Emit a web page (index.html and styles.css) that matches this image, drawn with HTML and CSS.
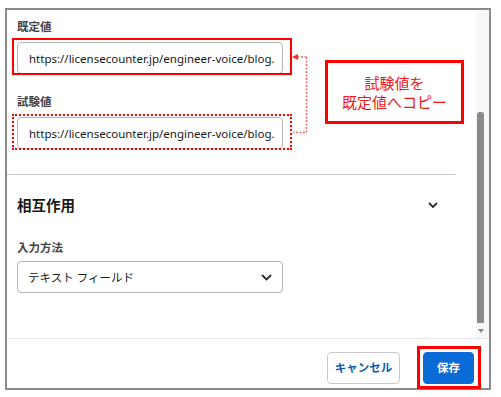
FILE: index.html
```html
<!DOCTYPE html>
<html lang="ja">
<head>
<meta charset="utf-8">
<link rel="stylesheet" href="styles.css">
</head>
<body>
<div class="frame">
  <div class="main">
    <div class="content">
      <div class="fields">
        <div class="label">既定値</div>
        <div class="input"><span>https://licensecounter.jp/engineer-voice/blog.</span></div>
        <div class="label label-2">試験値</div>
        <div class="input"><span>https://licensecounter.jp/engineer-voice/blog.</span></div>
      </div>
      <div class="divider"></div>
      <div class="section">
        <div class="section-head">
          <span class="section-title">相互作用</span>
          <svg class="chev" width="10" height="6" viewBox="0 0 10 6"><polyline points="1,1 5,5 9,1" fill="none" stroke="#2b2b2b" stroke-width="1.8"/></svg>
        </div>
        <div class="label label-3">入力方法</div>
        <div class="select">
          <span>テキスト フィールド</span>
          <svg width="11" height="7" viewBox="0 0 11 7"><polyline points="1,1 5.5,5.5 10,1" fill="none" stroke="#2b2b2b" stroke-width="1.8"/></svg>
        </div>
      </div>
    </div>
    <div class="scrollbar">
      <div class="thumb"></div>
      <div class="arrow"></div>
    </div>
  </div>
  <div class="footer">
    <button class="btn btn-cancel">キャンセル</button>
    <button class="btn btn-save">保存</button>
  </div>
</div>

<div class="mark mark-default"></div>
<div class="mark mark-test"></div>
<div class="mark mark-save"></div>
<div class="callout">試験値を<br>既定値へコピー</div>
<svg class="connector" width="501" height="397" viewBox="0 0 501 397">
  <path d="M306.5 57 H297 M306.5 57 V132.5 H293" fill="none" stroke="#f46a6a" stroke-width="1.5" stroke-dasharray="2 1.5"/>
  <polygon points="292,57 298,54 298,60" fill="#f03030"/>
</svg>
</body>
</html>
```

FILE: styles.css
```css
* { box-sizing: border-box; }
html, body { margin: 0; padding: 0; background: #fff; }
body {
  position: relative;
  width: 501px;
  height: 397px;
  overflow: hidden;
  font-family: "Noto Sans", "Noto Sans CJK JP", sans-serif;
  color: #181818;
}
.frame {
  margin: 8px 0 0 5px;
  width: 486px;
  height: 382px;
  border: 2px solid #8b8b8b;
  display: flex;
  flex-direction: column;
  background: #fff;
}
.main {
  flex: 1;
  display: flex;
  min-height: 0;
}
.content {
  width: 449px;
  padding-top: 9px;
}
.fields { padding: 0 10px; }
.label {
  font-size: 11.5px;
  font-weight: 700;
  line-height: 16px;
  color: #444;
  height: 16px;
}
.label-2 { margin-top: 20px; }
.input, .select {
  width: 266px;
  height: 32px;
  border: 1px solid #b4b4b4;
  border-radius: 4px;
  margin-top: 7px;
  padding: 0 8px 0 11px;
  display: flex;
  align-items: center;
  font-size: 11.5px;
  white-space: nowrap;
  overflow: hidden;
  background: #fff;
}
.input span { flex: none; }
.divider {
  margin-top: 25px;
  height: 1px;
  background: #c9ced4;
}
.section { padding: 0 18px 0 10px; }
.section-head {
  margin-top: 20px;
  height: 20px;
  display: flex;
  align-items: center;
  justify-content: space-between;
}
.section-title {
  font-size: 14.5px;
  font-weight: 700;
  line-height: 20px;
}
.chev { margin-top: -1px; }
.label-3 { margin-top: 25px; }
.select {
  margin-top: 5px;
  justify-content: space-between;
  padding: 0 10px 0 10px;
  font-size: 11.5px;
}
.scrollbar {
  margin-left: auto;
  width: 13px;
  background: #f7f7f7;
  display: flex;
  flex-direction: column;
  padding-left: 1px;
}
.thumb {
  margin-top: 102px;
  width: 7px;
  height: 211px;
  background: #8a8a8a;
  border-radius: 3px 3px 0 0;
}
.arrow {
  margin-top: 6px;
  margin-left: 0.5px;
  width: 0;
  height: 0;
  border-left: 3px solid transparent;
  border-right: 3px solid transparent;
  border-top: 4px solid #8a8a8a;
}
.footer {
  height: 50px;
  border-top: 1px solid #e3e7eb;
  display: flex;
  justify-content: flex-end;
  align-items: flex-start;
  padding: 13px 15px 0 0;
  gap: 23px;
}
.btn {
  height: 32px;
  border-radius: 4px;
  font-family: "Noto Sans", "Noto Sans CJK JP", sans-serif;
  font-size: 11.5px;
  font-weight: 700;
  padding: 0;
  line-height: 30px;
}
.btn-cancel {
  width: 73px;
  background: #fff;
  border: 1px solid #c9c9c9;
  color: #0b5cab;
}
.btn-save {
  width: 51px;
  background: #0b6bd6;
  border: 1px solid #0b6bd6;
  color: #fff;
}
.mark { position: absolute; }
.mark-default {
  left: 12px; top: 38px; width: 280px; height: 37px;
  border: 2px solid #f00;
}
.mark-test {
  left: 12px; top: 114px; width: 280px; height: 36px;
  border: 2px dotted #f00;
}
.mark-save {
  left: 417px; top: 346px; width: 64px; height: 43px;
  border: 3px solid #f00;
}
.callout {
  position: absolute;
  left: 325px; top: 60px; width: 139px; height: 64px;
  border: 3px solid #f00;
  background: #fff;
  color: #f01818;
  font-size: 15px;
  line-height: 19px;
  text-align: center;
  padding-top: 11px;
}
.connector {
  position: absolute;
  left: 0; top: 0;
  pointer-events: none;
}
```
